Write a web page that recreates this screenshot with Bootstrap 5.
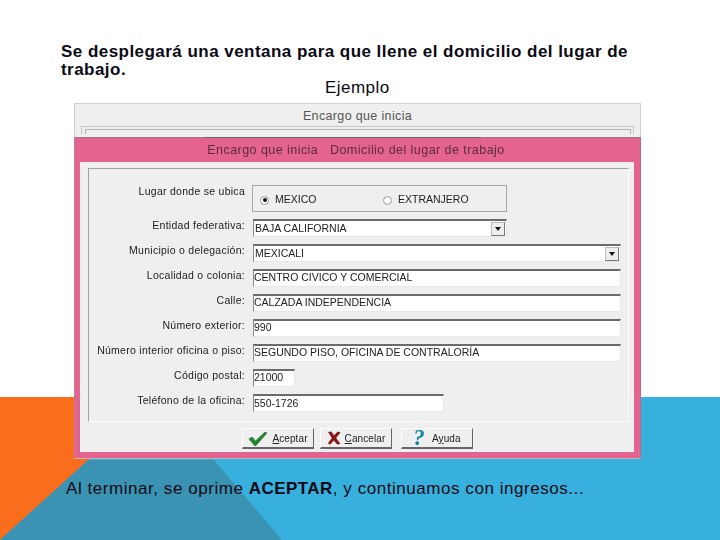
<!DOCTYPE html>
<html lang="es"><head><meta charset="utf-8"><title>Ejemplo</title>
<link href="https://cdn.jsdelivr.net/npm/bootstrap@5.3.0/dist/css/bootstrap.min.css" rel="stylesheet">
<style>
html,body{margin:0;background:#fff}
.slide{position:relative;width:720px;height:540px;overflow:hidden;background:#fff;font-family:"Liberation Sans",Arial,sans-serif;color:#0a0a14}
.bgart{position:absolute;left:0;top:0;width:720px;height:540px}
.head{position:absolute;left:61px;top:43px;width:590px;font-size:17px;line-height:18px;font-weight:700;letter-spacing:.46px;margin:0}
.ejem{position:absolute;left:325px;top:79px;font-size:17px;line-height:18px;letter-spacing:.45px}
.foot{position:absolute;left:66px;top:480px;font-size:17px;line-height:18px;letter-spacing:.55px;margin:0}
.foot strong{letter-spacing:.45px}
.backwin{position:absolute;left:74px;top:103px;width:567px;height:40px;background:#efefef;border:1px solid #cfcfcf;color:#555;font-size:12.5px;text-align:center;padding-top:5px;line-height:14px;letter-spacing:.35px}
.backline{height:8px;margin:3px 6px 0 6px;border:1px solid #c8c8c8;border-bottom:0;padding:2px 2px 0 3px}
.backline:after{content:"";display:block;height:5px;border:1px solid #b5b5b5;border-bottom:0}
.tabedge{position:absolute;left:129px;top:-1px;width:277px;height:1px;background:#666}
.win{position:absolute;left:74px;top:137px;width:567px;height:322px;background:#e4648f;border:1px solid #a0788a;border-bottom-color:#b8b8b8;border-left-color:#c87a98;border-right-color:#b56a87;padding:0 6px 6px 5px;display:flex;flex-direction:column;filter:blur(.3px)}
.wintitle{height:24px;line-height:24px;text-align:center;font-size:12.5px;color:#5c2a42;letter-spacing:.45px;padding-right:2px;flex:none}
.winbody{flex:1;background:#efefef;padding:6px 5px 0 8px;display:flex;flex-direction:column}
.grp{height:254px;border:1px solid #fff;border-top-color:#a3a3a3;border-left-color:#a3a3a3;padding:16px 7px 0 7px;flex:none}
.frow{display:grid;grid-template-columns:150px 1fr;column-gap:7px;align-items:start;height:25px;font-size:10.5px;color:#222}
.frow label{text-align:right;line-height:13px;padding:0 1px 0 0;white-space:nowrap;letter-spacing:.27px;margin:0}
.tbox{display:block;height:18px;background:#fff;border:1px solid #e8e8e8;border-top:2px solid #6b6b6b;border-left:1px solid #8a8a8a;font-size:10.5px;line-height:13px;padding:0 0 0 0;overflow:hidden;white-space:nowrap;color:#222;letter-spacing:0;width:368px}
.tw1{width:42px}.tw2{width:191px}
.clipd{padding-top:1px}
.combo{display:flex;justify-content:space-between;align-items:center;padding:0 1px 0 1px}
.w255{width:254px}
.arrow{width:14px;height:14px;background:#eee;border:1px solid #bbb;border-right-color:#777;border-bottom-color:#777;display:flex;align-items:center;justify-content:center;flex:none}
.arrow:after{content:"";border:3px solid transparent;border-top:4px solid #111;margin-top:4px}
.radios{width:255px;height:27px;border:1px solid #a8a8a8;display:flex;align-items:center;font-size:10.5px;color:#222;letter-spacing:0;padding-top:3px;margin-left:-1px}
.rdo{display:flex;align-items:center;gap:6px}
.rdo:first-child{margin-left:7px;width:123px}
.dot{width:9px;height:9px;border-radius:50%;border:1px solid #999;background:#fff;display:block;position:relative}
.dot.on:after{content:"";position:absolute;left:1.5px;top:1.5px;width:4px;height:4px;border-radius:50%;background:#111}
.rrow{height:34px}
.btnbar{display:flex;padding-left:154px;margin-top:6px}
.wbtn{width:72px;height:21px;background:#efefef;border:1px solid #fff;border-right:1px solid #666;border-bottom:2px solid #666;border-radius:0;font-size:10px;color:#222;display:flex;align-items:center;justify-content:center;gap:4px;padding:0;letter-spacing:.1px}
.gap1{margin-left:6px}.gap2{margin-left:9px}
.q{font:italic 700 23px/18px "Liberation Serif",serif;color:#0d8aa0;margin-right:3px}
</style></head>
<body>
<div class="slide">
<svg class="bgart" viewBox="0 0 720 540" aria-hidden="true">
<rect x="0" y="397" width="720" height="143" fill="#38b0de"/>
<polygon points="0,397 160,397 0,540" fill="#f96d1c"/>
<polygon points="0,540 88,460 214,460 282,540" fill="#3a93b3"/>
</svg>
<p class="head">Se desplegará una ventana para que llene el domicilio del lugar de trabajo.</p>
<div class="ejem">Ejemplo</div>
<div class="backwin">Encargo que inicia<div class="backline"></div></div>
<div class="win">
<i class="tabedge"></i>
<div class="wintitle">Encargo que inicia &nbsp; Domicilio del lugar de trabajo</div>
<div class="winbody">
<div class="grp">
<div class="frow rrow"><label>Lugar donde se ubica</label>
<div class="radios"><span class="rdo"><i class="dot on"></i>MEXICO</span><span class="rdo"><i class="dot"></i>EXTRANJERO</span></div></div>
<div class="frow"><label>Entidad federativa:</label><div class="tbox combo w255"><span>BAJA CALIFORNIA</span><i class="arrow"></i></div></div>
<div class="frow"><label>Municipio o delegación:</label><div class="tbox combo"><span>MEXICALI</span><i class="arrow"></i></div></div>
<div class="frow"><label>Localidad o colonia:</label><div class="tbox">CENTRO CIVICO Y COMERCIAL</div></div>
<div class="frow"><label>Calle:</label><div class="tbox">CALZADA INDEPENDENCIA</div></div>
<div class="frow"><label>Número exterior:</label><div class="tbox">990</div></div>
<div class="frow"><label>Número interior oficina o piso:</label><div class="tbox">SEGUNDO PISO, OFICINA DE CONTRALORÍA</div></div>
<div class="frow"><label>Código postal:</label><div class="tbox tw1">21000</div></div>
<div class="frow"><label>Teléfono de la oficina:</label><div class="tbox tw2 clipd">550-1726</div></div>
</div>
<div class="btnbar">
<button type="button" class="btn wbtn"><svg width="20" height="15" viewBox="0 0 20 15"><path d="M1 8 L4 6 L7.5 10 L17 1 L19 2 L8 14.5 L6.5 14.5Z" fill="#1f8a2e" stroke="#0d4d18" stroke-width=".5"/></svg><span><u>A</u>ceptar</span></button>
<button type="button" class="btn wbtn gap1"><svg width="14" height="14" viewBox="0 0 13 13"><path d="M1 1 L4 .5 L6.5 4 L10 .5 L12.5 1.5 L8.5 6.5 L12.5 12 L9.5 12.5 L6.3 8.8 L3 12.5 L.8 11.5 L4.5 6.5Z" fill="#8a1414"/></svg><span><u>C</u>ancelar</span></button>
<button type="button" class="btn wbtn gap2"><span class="q">?</span><span>A<u>y</u>uda</span></button>
</div>
</div>
</div>
<p class="foot">Al terminar, se oprime <strong>ACEPTAR</strong>, y continuamos con ingresos...</p>
</div>
<script src="https://cdn.jsdelivr.net/npm/bootstrap@5.3.0/dist/js/bootstrap.bundle.min.js"></script>
</body></html>
